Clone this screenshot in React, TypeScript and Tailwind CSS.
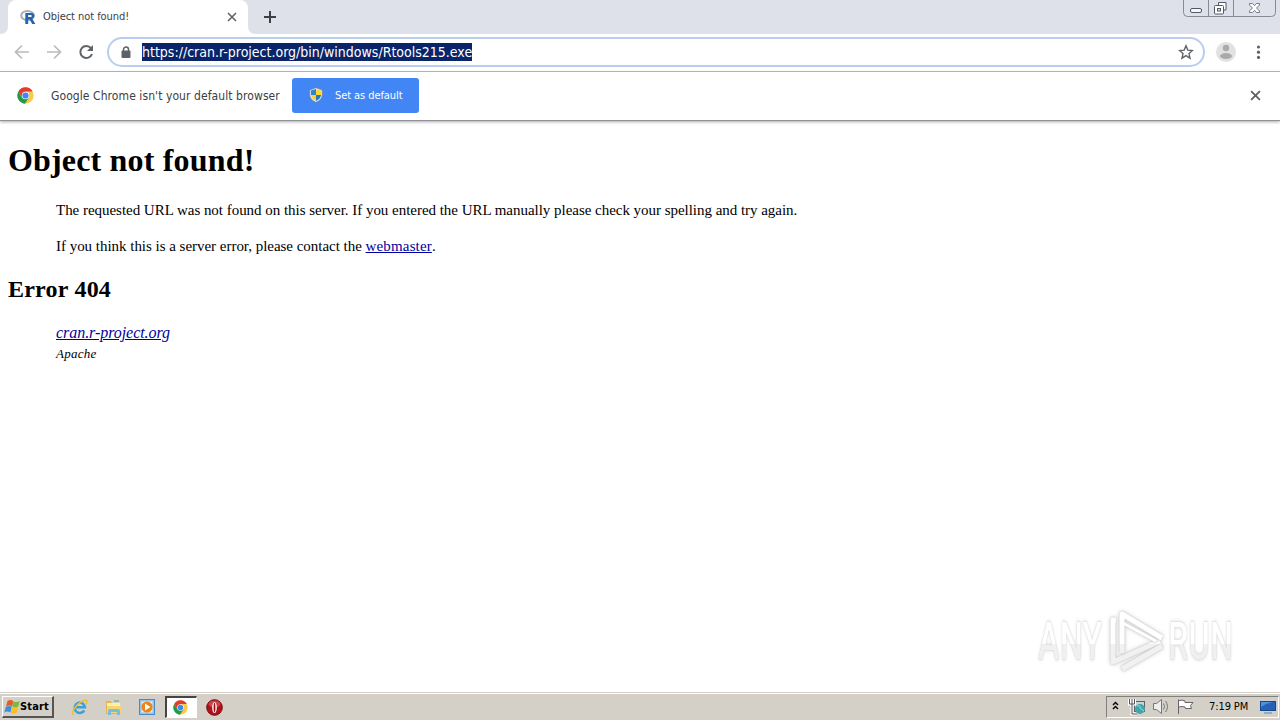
import React from "react";

const ui = "font-['DejaVu_Sans_Condensed','DejaVu_Sans',sans-serif] [font-stretch:condensed] whitespace-nowrap";

function ChromeLogo({ size }: { size: number }) {
  return (
    <svg width={size} height={size} viewBox="0 0 48 48" className="shrink-0">
      <circle cx="24" cy="24" r="23" fill="#fbc94a" />
      <path d="M4.1 12.5 A23 23 0 0 0 22 47 L34 29.5 L24 24 L14 29.5Z" fill="#229a4b" />
      <path d="M4.1 12.5 A23 23 0 0 1 44 12.5 H24 L14 29Z" fill="#e33b2e" />
      <circle cx="24" cy="24" r="10.500" fill="#fff" />
      <circle cx="24" cy="24" r="8.8" fill="#4285f4" />
    </svg>
  );
}

function RLogo() {
  return (
    <svg width="16" height="16" viewBox="0 0 16 16" className="shrink-0">
      <ellipse cx="7.5" cy="6.500" rx="6.3" ry="4.6" fill="none" stroke="#a9adb5" strokeWidth="2" />
      <path d="M5.3 4h6c4.1 0 4 5 .9 5.6L15.3 15h-3.1L9.6 10.500H8.2V15H5.3Z" fill="#2464b5" />
      <path d="M8.2 6h2.6c1.3 0 1.3 2 0 2H8.2Z" fill="#fff" />
    </svg>
  );
}

function Shield() {
  return (
    <svg width="14" height="16" viewBox="0 0 14 16" className="mb-px shrink-0">
      <path d="M7 .7 13.2 3v5c0 3.2-2.7 5.8-6.2 7.3C3.500 13.800.8 11.200.8 8V3Z" fill="#e9edf2" stroke="#718398" strokeWidth=".7" />
      <path d="M7 2v6H2V3.600Z" fill="#2f83cf" />
      <path d="M7 2v6h5V3.600Z" fill="#f8d838" />
      <path d="M2 8h5v6C4 12.500 2.200 10.500 2 8Z" fill="#f5d52f" />
      <path d="M12 8H7v6c3-1.500 4.800-3.500 5-6Z" fill="#2875c4" />
    </svg>
  );
}

function CloseX({ size, stroke = 1.8 }: { size: number; stroke?: number }) {
  return (
    <svg width={size} height={size} viewBox="0 0 10 10" className="shrink-0">
      <path d="m1 1 8 8M9 1 1 9" stroke="#5f6368" strokeWidth={stroke} />
    </svg>
  );
}

function WindowButtons() {
  return (
    <svg width="94" height="18" viewBox="0 0 94 18" className="ml-auto mr-[3px] shrink-0">
      <path d="M.5 0v12.500q0 4 4 4h84q4 0 4-4V0M25.500 0v16.500M50.500 0v16.500" fill="none" stroke="#858a96" />
      <rect x="7.500" y="8.500" width="11" height="4" rx="1.500" fill="#f5f6f8" stroke="#535866" />
      <path d="M35.500 5V2.500h7.500v7.500h-2.500" fill="#fff" stroke="#535866" />
      <rect x="31.500" y="5.500" width="9" height="8.500" rx="1" fill="#fff" stroke="#535866" />
      <rect x="34.500" y="8.500" width="3" height="2.500" fill="#dee1e9" stroke="#535866" />
      <path d="M66.500 3.500h3l2 2.200 2-2.200h3v1.500l-3 3 3 3v1.500h-3l-2-2.200-2 2.200h-3V11l3-3-3-3Z" fill="#fff" stroke="#686d79" strokeWidth=".9" />
    </svg>
  );
}

function TabStrip() {
  return (
    <header className="flex h-[34px] shrink-0 bg-[#dee1e9]">
      <svg width="8" height="34" viewBox="0 0 8 34" className="shrink-0"><path d="M8 26q0 8-8 8h8Z" fill="#fff" /></svg>
      <div className="flex w-60 items-center rounded-t-lg bg-white pl-3">
        <RLogo />
        <span className={`ml-[7px] w-[184px] text-[11px] tracking-[-0.05px] text-[#3c4043] ${ui}`}>Object not found!</span>
        <CloseX size={10} stroke={1.6} />
      </div>
      <svg width="42" height="34" viewBox="0 0 42 34">
        <path d="M0 26q0 8 8 8H0Z" fill="#fff" />
        <path d="M16 17h12M22 11v12" stroke="#3c4043" strokeWidth="2" />
      </svg>
      <WindowButtons />
    </header>
  );
}

function Toolbar() {
  return (
    <div className="flex h-[38px] shrink-0 items-center border-b border-[#b1b3b7] bg-white">
      <svg width="107" height="37" viewBox="0 0 107 37" className="shrink-0" fill="none">
        <path d="M29 18H16M22 11.500 15.500 18l6.500 6.500M47 18h13M54 11.500l6.500 6.500-6.500 6.500" stroke="#b9bbbe" strokeWidth="1.700" />
        <path d="M91 14.200A6 6 0 1 0 92 20" stroke="#5f6368" strokeWidth="2" />
        <path d="M93 11v6h-6Z" fill="#5f6368" />
      </svg>
      <div className="mb-px flex h-[30px] w-[1098px] items-center rounded-full border-2 border-[#b9cdf1] bg-white pl-3 pr-[9px]">
        <svg width="10" height="13" viewBox="0 0 10 13" className="mr-[11px] shrink-0">
          <path d="M2.500 6V3.500a2.500 2.500 0 0 1 5 0V6" stroke="#5f6368" strokeWidth="1.500" fill="none" />
          <rect x=".5" y="4.500" width="9" height="7.500" rx="1" fill="#5f6368" />
        </svg>
        <span className={`h-[18px] w-[330px] bg-[#0a246a] text-[14px] leading-[18px] text-white ${ui}`}>https://cran.r-project.org/bin/windows/Rtools215.exe</span>
        <svg width="16" height="16" viewBox="0 0 16 16" className="ml-auto shrink-0">
          <path d="m8 1.800 1.800 4.300 4.700.4-3.500 3.100 1 4.600-4-2.500-4 2.500 1-4.600-3.500-3.100 4.700-.4Z" fill="none" stroke="#5f6368" strokeWidth="1.400" />
        </svg>
      </div>
      <svg width="75" height="37" viewBox="0 0 75 37" className="shrink-0">
        <circle cx="21" cy="18" r="10" fill="#e1e1e1" />
        <circle cx="21" cy="14" r="3.200" fill="#aaa" />
        <ellipse cx="21" cy="22" rx="6" ry="3" fill="#aaa" />
        <circle cx="53.500" cy="13" r="1.600" fill="#5f6368" />
        <circle cx="53.500" cy="18.200" r="1.600" fill="#5f6368" />
        <circle cx="53.500" cy="23.400" r="1.600" fill="#5f6368" />
      </svg>
    </div>
  );
}

function InfoBar() {
  return (
    <div className="z-10 flex h-[49px] shrink-0 items-center border-b border-[#909194] bg-white pb-px pl-[17px] pr-[19px] shadow-[0_1px_3px_#aaa]">
      <ChromeLogo size={17} />
      <span className={`ml-[17px] w-[241px] text-[12px] tracking-[0.08px] text-[#3c4043] ${ui}`}>Google Chrome isn't your default browser</span>
      <button className="flex h-[35px] w-[127px] items-center rounded-[3px] bg-[#4285f4] pl-[17px] text-white">
        <Shield />
        <span className={`ml-3 pt-px text-[11px] tracking-[-0.08px] ${ui}`}>Set as default</span>
      </button>
      <div className="ml-auto"><CloseX size={11} stroke={1.7} /></div>
    </div>
  );
}

function Watermark() {
  const word = "font-['Roboto','Liberation_Sans',sans-serif] origin-left text-[51px] leading-[64px] font-medium text-transparent bg-linear-to-b from-white from-53% to-[#f0f0f0] to-53% bg-clip-text [filter:drop-shadow(0_0_1px_#d0d0d0)_drop-shadow(0_0_2px_#dedede)] whitespace-nowrap";
  return (
    <div className="absolute right-[46px] bottom-[18px] flex h-[64px] w-[196px] items-center">
      <div className="w-[66px]"><span className={`${word} inline-block scale-x-[0.64]`}>ANY</span></div>
      <svg width="62" height="64" viewBox="0 0 62 64" className="shrink-0 overflow-visible">
        <defs>
          <linearGradient id="mark" gradientUnits="userSpaceOnUse" x1="0" y1="0" x2="0" y2="64">
            <stop offset="53%" stopColor="#fff" />
            <stop offset="53%" stopColor="#f1f1f1" />
          </linearGradient>
        </defs>
        <g fill="none" stroke="url(#mark)" strokeWidth="5" strokeLinejoin="round" className="[filter:drop-shadow(0_0_1px_#c4c4c4)_drop-shadow(0_0_2px_#dadada)]">
          <path d="M12 10H9V52L56 31" />
          <path d="M18 59 58 36" />
        </g>
        <g fill="none" stroke="url(#mark)" strokeWidth="5" strokeLinejoin="round" className="[filter:drop-shadow(0_0_1px_#c4c4c4)_drop-shadow(0_0_2px_#dadada)]">
          <path d="M18 43V4l40 24" />
          <path d="m19 13 33 18" strokeWidth="3" />
        </g>
      </svg>
      <div className="ml-[2px] w-[65px]"><span className={`${word} inline-block scale-x-[0.64]`}>RUN</span></div>
    </div>
  );
}

function ErrorPage() {
  return (
    <main className="relative h-[571px] shrink-0 bg-white font-['Liberation_Serif',serif] text-[16px] leading-[18px] text-black">
      <h1 className="px-2 pt-[21px] text-[32px] leading-[36px] font-bold tracking-[0.17px]">Object not found!</h1>
      <div className="ml-14 text-[15px]">
        <p className="mt-[23px] whitespace-nowrap tracking-[-0.03px]">The requested URL was not found on this server. If you entered the URL manually please check your spelling and try again.</p>
        <p className="mt-[18px] tracking-[-0.025px]">If you think this is a server error, please contact the <a className="tracking-[0.15px] text-[#0000a0] underline">webmaster</a>.</p>
      </div>
      <h2 className="mt-[20px] px-2 text-[24px] leading-[28px] font-bold tracking-[0.22px]">Error 404</h2>
      <address className="mt-[21px] ml-14 italic">
        <a className="block w-fit tracking-[-0.05px] text-[#0000a0] underline">cran.r-project.org</a>
        <span className="mt-[3px] block text-[13px] tracking-[0.25px]">Apache</span>
      </address>
      <Watermark />
    </main>
  );
}

function StartFlag() {
  return (
    <svg width="16" height="16" viewBox="0 0 16 16" className="shrink-0">
      <path d="M3.500 2q3-2 6 .2L8 7.500q-2.800-1.800-6 0Z" fill="#e85a25" />
      <path d="M9.700 2.500q3 1.400 6-.5L14.300 7.500Q11.500 9.300 8.300 7.700Z" fill="#78b940" />
      <path d="M1.800 8q3-2 6-.2L6.300 13.500q-2.800-1.800-6 0Z" fill="#3b8fd8" />
      <path d="M8.100 8.300q3 1.500 6-.3L12.800 13.500q-3 2-6 .2Z" fill="#f8bd28" />
    </svg>
  );
}

function Taskbar() {
  return (
    <footer className="flex h-7 shrink-0 items-center bg-[#d4d0c8] pt-[2px] shadow-[inset_0_1px_0_#d4d0c8,inset_0_2px_0_#fff]">
      <button className="ml-[2px] flex h-[22px] w-[52px] items-center border-t border-r-2 border-b-2 border-l border-t-white border-r-[#555] border-b-[#555] border-l-white bg-[#d4d0c8] pl-[1px] text-black">
        <StartFlag />
        <span className={`pt-px text-[11px] font-bold tracking-[0.15px] ${ui}`}>Start</span>
      </button>
      <svg width="17" height="17" viewBox="0 0 17 17" className="ml-[17px]">
        <path d="M13.300 11.500a5.200 5.200 0 1 1 .7-3.200H4.500" fill="none" stroke="#3da0d8" strokeWidth="2.500" />
        <path d="M3 15.500C-2 15 6 4 13 1.500c4-1.300 3 2 2 3.500" fill="none" stroke="#edbd37" strokeWidth="1.500" />
      </svg>
      <svg width="17" height="17" viewBox="0 0 17 17" className="ml-[17px]">
        <path d="M1 2h5l1 2h8v11H1Z" fill="#e5b64e" /><path d="M2 4h13v7H2Z" fill="#fff0a0" /><path d="M2 7h14v7H2Z" fill="#f5d675" />
        <path d="M3 16v-4q0-2 2-2h8q2 0 2 2v4h-3v-3H6v3Z" fill="#79bddb" /><path d="M9 2h5" stroke="#4faa61" />
      </svg>
      <svg width="17" height="17" viewBox="0 0 17 17" className="ml-[17px]">
        <rect x=".5" y=".5" width="15" height="15" fill="#91c5ed" stroke="#478bc5" />
        <rect x="2.500" y="2.500" width="11" height="11" fill="#e4eff6" />
        <circle cx="8" cy="8" r="5.600" fill="#ee8416" /><path d="m6 4.500 5.500 3.500L6 11.500Z" fill="#fff" />
      </svg>
      <div className="ml-[9px] flex h-[22px] w-[32px] items-center justify-center border-t-2 border-r border-b border-l-2 border-t-[#444] border-r-white border-b-white border-l-[#444] bg-white pr-[2px]"><ChromeLogo size={15} /></div>
      <svg width="17" height="17" viewBox="0 0 17 17" className="ml-[9px]">
        <circle cx="8.500" cy="8.500" r="7.800" fill="#ae1118" stroke="#730b12" /><ellipse cx="8.500" cy="5" rx="6" ry="3.500" fill="#dc5557" opacity=".7" /><ellipse cx="8.500" cy="8.500" rx="2.300" ry="5.500" fill="#fff" /><ellipse cx="8.500" cy="8.500" rx=".9" ry="4.700" fill="#95121c" />
      </svg>
      <div className="ml-auto mr-px flex h-[22px] w-[173px] items-center border-t border-r border-b border-l border-t-[#808080] border-r-white border-b-white border-l-[#808080]">
        <svg width="88" height="20" viewBox="0 0 88 20" className="shrink-0">
          <path d="m6 8 2.500-2.500L11 8M6 12l2.500-2.500L11 12" fill="none" stroke="#000" strokeWidth="1.400" />
          <rect x="27.500" y="4.500" width="10" height="10" fill="#c5d6d8" stroke="#576568" />
          <path d="M22.500 2v5h5V2M25 2v15h5" fill="none" stroke="#fff" strokeWidth="3" /><path d="M22.500 2v5h5V2M25 2v15h5" fill="none" stroke="#555" />
          <circle cx="33" cy="12" r="5" fill="#45a4a9" /><path d="M30 9q4-1 3 2l4 3" stroke="#8ce3de" fill="none" />
          <path d="M46.500 6.500h3l5-4v14l-5-4h-3Z" fill="#eee" stroke="#777" />
          <path d="M56.500 6.500q2 3 0 6M58.500 4q4 5.500 0 11" fill="none" stroke="#777" />
          <path d="M71.500 17V2.500M72 3.500q3-1 6 .5v1.500h8l-2.500 3 1 3h-6l-.5-1.500q-3-1-6 0" fill="#fff" stroke="#666" />
        </svg>
        <span className={`ml-[14px] w-[42px] pt-px text-[11px] tracking-[-0.1px] text-black ${ui}`}>7:19 PM</span>
        <svg width="16" height="15" viewBox="0 0 16 15" className="ml-[9px] shrink-0"><rect x=".5" y="1.500" width="15" height="9" fill="#285fb9" stroke="#164989" /><path d="M1 2h12q-7 1-12 5Z" fill="#4e91df" /><path d="M4 13h8" stroke="#8babc6" strokeWidth="2" /></svg>
      </div>
    </footer>
  );
}

export default function App() {
  return (
    <div className="flex h-[720px] w-[1280px] flex-col overflow-hidden bg-white">
      <TabStrip />
      <Toolbar />
      <InfoBar />
      <ErrorPage />
      <Taskbar />
    </div>
  );
}
